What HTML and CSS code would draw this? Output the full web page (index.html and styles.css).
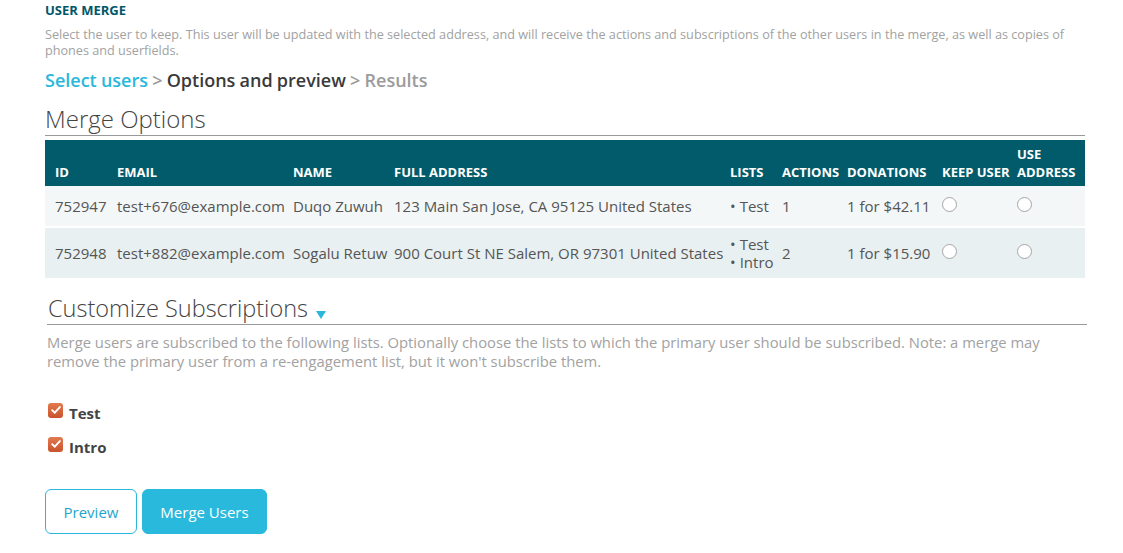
FILE: index.html
```html
<!DOCTYPE html>
<html>
<head>
<meta charset="utf-8">
<link rel="stylesheet" href="styles.css">
</head>
<body>
<div class="page">
  <h1 class="title">USER MERGE</h1>
  <p class="intro">Select the user to keep. This user will be updated with the selected address, and will receive the actions and subscriptions of the other users in the merge, as well as copies of phones and userfields.</p>
  <div class="crumbs"><span class="crumb-done">Select users</span> <span class="sep">&gt;</span> <span class="crumb-current">Options and preview</span> <span class="sep">&gt;</span> <span class="crumb-next">Results</span></div>

  <h2 class="section-title">Merge Options</h2>
  <table class="merge-table">
    <colgroup>
      <col class="c-id"><col class="c-email"><col class="c-name"><col class="c-addr"><col class="c-lists"><col class="c-actions"><col class="c-don"><col class="c-keep"><col class="c-use">
    </colgroup>
    <thead>
      <tr>
        <th>ID</th><th>EMAIL</th><th>NAME</th><th>FULL ADDRESS</th><th>LISTS</th><th>ACTIONS</th><th>DONATIONS</th><th>KEEP USER</th><th>USE<br>ADDRESS</th>
      </tr>
    </thead>
    <tbody>
      <tr class="row-a">
        <td>752947</td><td>test+676@example.com</td><td>Duqo Zuwuh</td><td>123 Main San Jose, CA 95125 United States</td>
        <td><ul class="lists"><li>Test</li></ul></td><td>1</td><td>1 for $42.11</td>
        <td><input type="radio" class="radio" name="keep"></td><td><input type="radio" class="radio" name="addr"></td>
      </tr>
      <tr class="row-b">
        <td>752948</td><td>test+882@example.com</td><td>Sogalu Retuw</td><td>900 Court St NE Salem, OR 97301 United States</td>
        <td><ul class="lists"><li>Test</li><li>Intro</li></ul></td><td>2</td><td>1 for $15.90</td>
        <td><input type="radio" class="radio" name="keep"></td><td><input type="radio" class="radio" name="addr"></td>
      </tr>
    </tbody>
  </table>

  <h2 class="section-title sub">Customize Subscriptions <span class="caret"></span></h2>
  <p class="note">Merge users are subscribed to the following lists. Optionally choose the lists to which the primary user should be subscribed. Note: a merge may remove the primary user from a re-engagement list, but it won't subscribe them.</p>

  <div class="checks">
    <label class="check"><span class="box"><svg viewBox="0 0 16 16" width="16" height="16"><path d="M3.6 8.2 L6.6 11.1 L12.4 4.6" fill="none" stroke="#fff" stroke-width="2.2" stroke-linecap="round" stroke-linejoin="round"/></svg></span>Test</label>
    <label class="check"><span class="box"><svg viewBox="0 0 16 16" width="16" height="16"><path d="M3.6 8.2 L6.6 11.1 L12.4 4.6" fill="none" stroke="#fff" stroke-width="2.2" stroke-linecap="round" stroke-linejoin="round"/></svg></span>Intro</label>
  </div>

  <div class="buttons">
    <button class="btn btn-outline">Preview</button>
    <button class="btn btn-primary">Merge Users</button>
  </div>
</div>
</body>
</html>
```

FILE: styles.css
```css
html, body {
  margin: 0;
  padding: 0;
  background: #fff;
}
body {
  font-family: "Open Sans", "Noto Sans", sans-serif;
  color: #555;
}
.page {
  padding: 2px 36px 0 45px;
}
.title {
  margin: 0;
  font-size: 13px;
  font-weight: 700;
  line-height: 16px;
  color: #00576a;
}
.intro {
  margin: 8px 0 0;
  font-size: 12.65px;
  line-height: 16px;
  color: #a2a2a2;
}
.crumbs {
  margin-top: 10px;
  font-size: 18px;
  font-weight: 600;
  line-height: 24px;
  color: #a0a0a0;
  word-spacing: -0.5px;
}
.crumb-done { color: #29b8dc; }
.crumb-current { color: #3a3a3a; }
.sep, .crumb-next { color: #9b9b9b; }

.section-title {
  margin: 12px 2px 0 0;
  font-size: 24px;
  font-weight: 300;
  line-height: 30px;
  color: #444;
  border-bottom: 1px solid #999;
  padding-bottom: 1px;
}
.section-title.sub {
  margin: 15px 0 0 2px;
  padding-left: 1px;
  font-size: 23.5px;
}
.caret {
  display: inline-block;
  width: 0;
  height: 0;
  border-left: 5px solid transparent;
  border-right: 5px solid transparent;
  border-top: 8px solid #29b8dc;
  margin-left: 2px;
  vertical-align: -2px;
}

.merge-table {
  margin-top: 4px;
  width: 1040px;
  table-layout: fixed;
  border-collapse: collapse;
  font-size: 15px;
}
.c-id { width: 68px; }
.c-email { width: 176px; }
.c-name { width: 101px; }
.c-addr { width: 336px; }
.c-lists { width: 52px; }
.c-actions { width: 65px; }
.c-don { width: 95px; }
.c-keep { width: 75px; }
.c-use { width: 72px; }

.merge-table th {
  background: #015b6b;
  color: #fff;
  font-size: 13px;
  font-weight: 700;
  text-align: left;
  vertical-align: bottom;
  line-height: 18px;
  padding: 5px 4px 5px;
  white-space: nowrap;
}
.merge-table td {
  padding: 7px 4px;
  line-height: 26px;
  color: #555;
  white-space: nowrap;
  vertical-align: middle;
  border-top: 2px solid #fff;
}
.merge-table th:first-child,
.merge-table td:first-child {
  padding-left: 10px;
}
.merge-table tbody tr:first-child td {
  border-top: 0;
}
.row-a td { background: #f3f7f8; }
.row-b td { background: #e9f0f2; }

.lists {
  list-style: none;
  margin: 0;
  padding: 0;
  font-size: 15px;
  line-height: 18px;
}
.row-a .lists { line-height: 26px; }
.lists li::before {
  content: "\2022";
  margin-right: 4px;
}

.radio {
  -webkit-appearance: none;
  appearance: none;
  width: 15px;
  height: 15px;
  margin: 0;
  border: 1px solid #a5a5a5;
  border-radius: 50%;
  background: #fff;
  vertical-align: middle;
  position: relative;
  top: -3px;
}

.note {
  margin: 8px 0 0 2px;
  font-size: 14.8px;
  line-height: 19px;
  color: #a2a2a2;
}

.checks {
  margin-top: 32px;
  display: flex;
  flex-direction: column;
  gap: 14px;
  padding-left: 3px;
}
.check {
  display: flex;
  align-items: center;
  gap: 6px;
  font-size: 15px;
  font-weight: 700;
  line-height: 20px;
  color: #444;
}
.box {
  width: 15px;
  height: 15px;
  border-radius: 3px;
  background: linear-gradient(#e27a4f, #c9532d);
  display: flex;
  align-items: center;
  justify-content: center;
  position: relative;
  top: -3px;
}
.box svg { display: block; width: 14px; height: 14px; }

.buttons {
  margin-top: 32px;
  display: flex;
  gap: 5px;
}
.btn {
  font-family: "Open Sans", "Noto Sans", sans-serif;
  font-size: 15px;
  height: 45px;
  border-radius: 6px;
  cursor: pointer;
}
.btn-outline {
  width: 92px;
  background: #fff;
  border: 1px solid #29b8dc;
  color: #1fa6cc;
}
.btn-primary {
  width: 125px;
  background: #29b9dc;
  border: 1px solid #29b9dc;
  color: #fff;
}
```
